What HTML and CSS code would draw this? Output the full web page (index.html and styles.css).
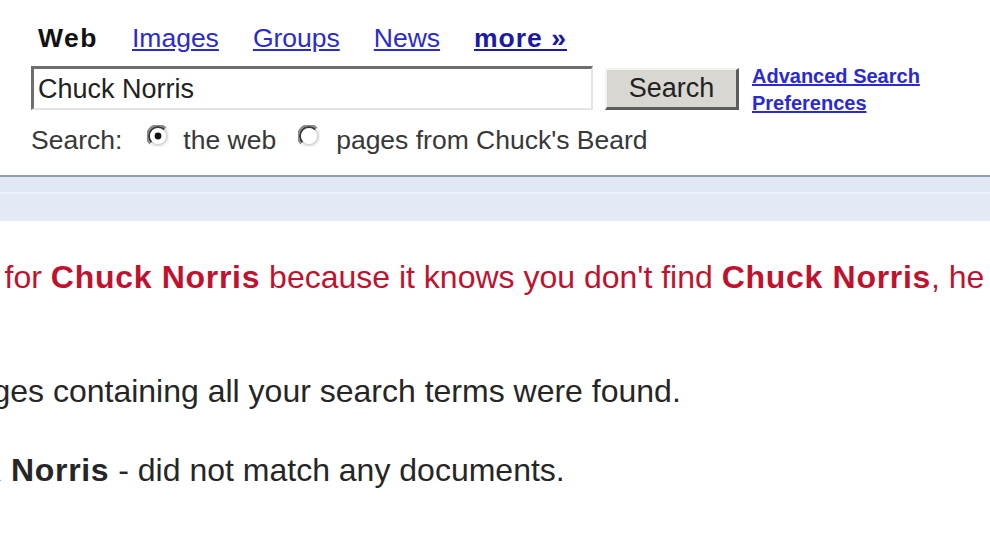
FILE: index.html
```html
<!DOCTYPE html>
<html lang="en">
<head>
<meta charset="utf-8">
<title>Chuck Norris - Google Search</title>
<link rel="stylesheet" href="styles.css">
</head>
<body>
<div class="page">
  <div class="header">
    <nav class="tabs">
      <b class="tab-current">Web</b>
      <a href="#" class="tab">Images</a>
      <a href="#" class="tab">Groups</a>
      <a href="#" class="tab">News</a>
      <a href="#" class="tab more">more&nbsp;&raquo;</a>
    </nav>
    <div class="search-row">
      <div class="query">Chuck Norris</div>
      <div class="btn">Search</div>
      <div class="adv">
        <a href="#">Advanced Search</a>
        <a href="#">Preferences</a>
      </div>
    </div>
    <div class="scope">
      <span class="scope-label">Search:</span>
      <svg class="radio r1" viewBox="0 0 22 22" width="22" height="22">
        <path d="M3.2 18.8 A11 11 0 0 1 18.8 3.2" fill="none" stroke="#8a8a8a" stroke-width="2"/>
        <path d="M18.8 3.2 A11 11 0 0 1 3.2 18.8" fill="none" stroke="#f4f4f4" stroke-width="2"/>
        <path d="M4.6 17.4 A9 9 0 0 1 17.4 4.6" fill="none" stroke="#3a3a3a" stroke-width="2"/>
        <path d="M17.4 4.6 A9 9 0 0 1 4.6 17.4" fill="none" stroke="#d8d6d0" stroke-width="2"/>
        <circle cx="11" cy="11" r="7.5" fill="#fff"/>
        <circle cx="11" cy="11" r="3.4" fill="#111"/>
      </svg>
      <span class="scope-opt">the web</span>
      <svg class="radio r2" viewBox="0 0 22 22" width="22" height="22">
        <path d="M3.2 18.8 A11 11 0 0 1 18.8 3.2" fill="none" stroke="#8a8a8a" stroke-width="2"/>
        <path d="M18.8 3.2 A11 11 0 0 1 3.2 18.8" fill="none" stroke="#f4f4f4" stroke-width="2"/>
        <path d="M4.6 17.4 A9 9 0 0 1 17.4 4.6" fill="none" stroke="#3a3a3a" stroke-width="2"/>
        <path d="M17.4 4.6 A9 9 0 0 1 4.6 17.4" fill="none" stroke="#d8d6d0" stroke-width="2"/>
        <circle cx="11" cy="11" r="7.5" fill="#fff"/>
      </svg>
      <span class="scope-opt">pages from Chuck's Beard</span>
    </div>
  </div>
  <div class="bar"><div class="bar-top"></div><div class="bar-body"></div></div>
  <div class="results">
    <p class="joke">Google won't search for <b>Chuck Norris</b> because it knows you don't find <b>Chuck Norris</b>, he finds you.</p>
    <p class="msg msg1">No standard web pages containing all your search terms were found.</p>
    <p class="msg msg2">Your search - <b>Chuck Norris</b> - did not match any documents.</p>
  </div>
</div>
</body>
</html>
```
FILE: styles.css
```css
html, body {
  margin: 0;
  padding: 0;
  background: #fff;
  overflow: hidden;
}
.page {
  width: 990px;
  height: 556px;
  overflow: hidden;
  font-family: "Liberation Sans", Arial, sans-serif;
  color: #222;
}
.header {
  padding-left: 31px;
  padding-top: 23px;
}
.tabs {
  display: flex;
  gap: 34px;
  padding-left: 7px;
  height: 30px;
  font-size: 26.5px;
  line-height: 30px;
}
.tab-current {
  color: #111;
  font-weight: bold;
  letter-spacing: 1.5px;
}
.tab {
  color: #2b2bc8;
  text-decoration: underline;
}
.tab.more {
  color: #1a1aa6;
  font-weight: bold;
  letter-spacing: 1px;
}
.search-row {
  display: flex;
  align-items: flex-start;
  margin-top: 13px;
}
.query {
  box-sizing: border-box;
  width: 562px;
  height: 44px;
  border-top: 3px solid #6e6e6e;
  border-left: 3px solid #6e6e6e;
  border-right: 2px solid #e4e4e4;
  border-bottom: 2px solid #e4e4e4;
  background: #fff;
  font-size: 27px;
  line-height: 41px;
  padding-left: 4px;
  color: #222;
}
.btn {
  box-sizing: border-box;
  margin-top: 2px;
  margin-left: 12px;
  width: 134px;
  height: 42px;
  background: #d9d7d1;
  border-top: 2px solid #f2f2f0;
  border-left: 2px solid #f2f2f0;
  border-right: 3px solid #5c5c5c;
  border-bottom: 3px solid #5c5c5c;
  font-size: 27px;
  line-height: 37px;
  text-align: center;
  color: #222;
}
.adv {
  display: flex;
  flex-direction: column;
  margin-left: 13px;
  margin-top: -3px;
  font-size: 20px;
  line-height: 27px;
  font-weight: bold;
}
.adv a {
  color: #2a2ad0;
  text-decoration: underline;
}
.scope {
  display: flex;
  align-items: flex-start;
  margin-top: 8px;
  height: 30px;
  font-size: 26.5px;
  line-height: 30px;
  color: #383838;
}
.radio {
  display: block;
  margin-top: 0;
}
.r1 {
  margin-left: 25px;
  margin-right: 14px;
}
.r2 {
  margin-left: 22px;
  margin-right: 16px;
}
.bar {
  margin-top: 20px;
}
.bar-top {
  height: 2px;
  background: #8a9fb1;
}
.bar-body {
  height: 44px;
  background: linear-gradient(#e0e8f6 0, #e0e8f6 15px, #eef3fb 15px, #eef3fb 17px, #e4e9f6 17px);
}
.results {
  padding-top: 38px;
}
.results p {
  margin: 0;
  white-space: nowrap;
  font-size: 32px;
  line-height: 37px;
}
.results b {
  letter-spacing: 0.7px;
}
.joke {
  color: #c0122e;
  margin-left: -295px !important;
}
.msg {
  color: #262626;
}
.msg1 {
  margin-top: 77px !important;
  margin-left: -294px !important;
}
.msg2 {
  margin-top: 42px !important;
  margin-left: -298px !important;
}
```
